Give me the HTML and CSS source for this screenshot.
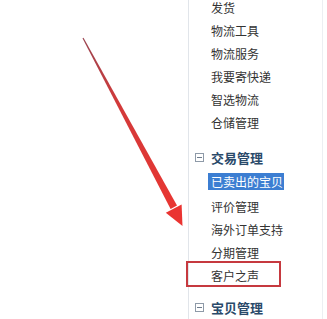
FILE: index.html
```html
<!DOCTYPE html>
<html lang="zh">
<head>
<meta charset="utf-8">
<link rel="stylesheet" href="styles.css">
</head>
<body>
<div class="page">
  <div class="canvas"></div>
  <nav class="sidebar">
    <ul class="group first">
      <li class="item">发货</li>
      <li class="item">物流工具</li>
      <li class="item">物流服务</li>
      <li class="item">我要寄快递</li>
      <li class="item">智选物流</li>
      <li class="item">仓储管理</li>
    </ul>
    <div class="header"><span class="toggle"></span>交易管理</div>
    <ul class="group">
      <li class="item active"><span class="hl">已卖出的宝贝</span></li>
      <li class="item gap">评价管理</li>
      <li class="item">海外订单支持</li>
      <li class="item">分期管理</li>
      <li class="item marked">客户之声<span class="redbox"></span></li>
    </ul>
    <div class="header last"><span class="toggle"></span>宝贝管理</div>
  </nav>
  <svg class="arrow" width="327" height="319" viewBox="0 0 327 319">
    <defs>
      <linearGradient id="g" x1="83" y1="38" x2="182" y2="225" gradientUnits="userSpaceOnUse">
        <stop offset="0" stop-color="#9a4450"/>
        <stop offset="0.35" stop-color="#d23a3a"/>
        <stop offset="1" stop-color="#ec3530"/>
      </linearGradient>
    </defs>
    <polygon fill="url(#g)" points="82.5,38.3 83.5,37.7 177.0,205.6 170.6,209.0"/>
    <polygon fill="#ea3431" points="182.5,226 181.6,204.4 165.8,212.8"/>
  </svg>
</div>
</body>
</html>
```
FILE: styles.css
```css
html, body {
  margin: 0;
  padding: 0;
  background: #ffffff;
}
.page {
  position: relative;
  width: 327px;
  height: 319px;
  overflow: hidden;
  display: flex;
  font-family: "Noto Sans CJK SC", "Noto Sans", sans-serif;
}
.canvas {
  width: 188px;
  flex: none;
}
.sidebar {
  flex: 1;
  border-left: 1px solid #e1e5ea;
  display: flex;
  flex-direction: column;
  margin-right: 4px;
  border-right: 1px solid #eceff2;
}
.group {
  list-style: none;
  margin: 0;
  padding: 0;
}
.group.first {
  margin-top: -4px;
}
.item {
  position: relative;
  height: 23px;
  line-height: 23px;
  font-size: 12px;
  color: #333333;
  padding-left: 22px;
  white-space: nowrap;
}
.item.active {
  padding-left: 19px;
}
.hl {
  display: inline-block;
  background: #3c7ed2;
  color: #ffffff;
  height: 17px;
  line-height: 17px;
  padding: 0 1px 0 3px;
  vertical-align: middle;
  margin-top: -3px;
}
.item.gap {
  margin-top: 3px;
}
.header {
  height: 23px;
  line-height: 23px;
  margin-top: 12px;
  font-size: 13px;
  font-weight: bold;
  color: #2a4a6a;
  display: flex;
  align-items: center;
  padding-left: 6px;
}
.header.last {
  margin-top: 9px;
}
.toggle {
  position: relative;
  width: 7px;
  height: 7px;
  border: 1px solid #8e9aa8;
  margin-right: 7px;
  box-sizing: content-box;
}
.toggle::after {
  content: "";
  position: absolute;
  left: 1px;
  right: 1px;
  top: 3px;
  height: 1px;
  background: #6e7c8c;
}
.redbox {
  position: absolute;
  left: -3px;
  top: -3px;
  width: 91px;
  height: 22px;
  border: 2px solid #c6393f;
}
.arrow {
  position: absolute;
  left: 0;
  top: 0;
  pointer-events: none;
}
```
